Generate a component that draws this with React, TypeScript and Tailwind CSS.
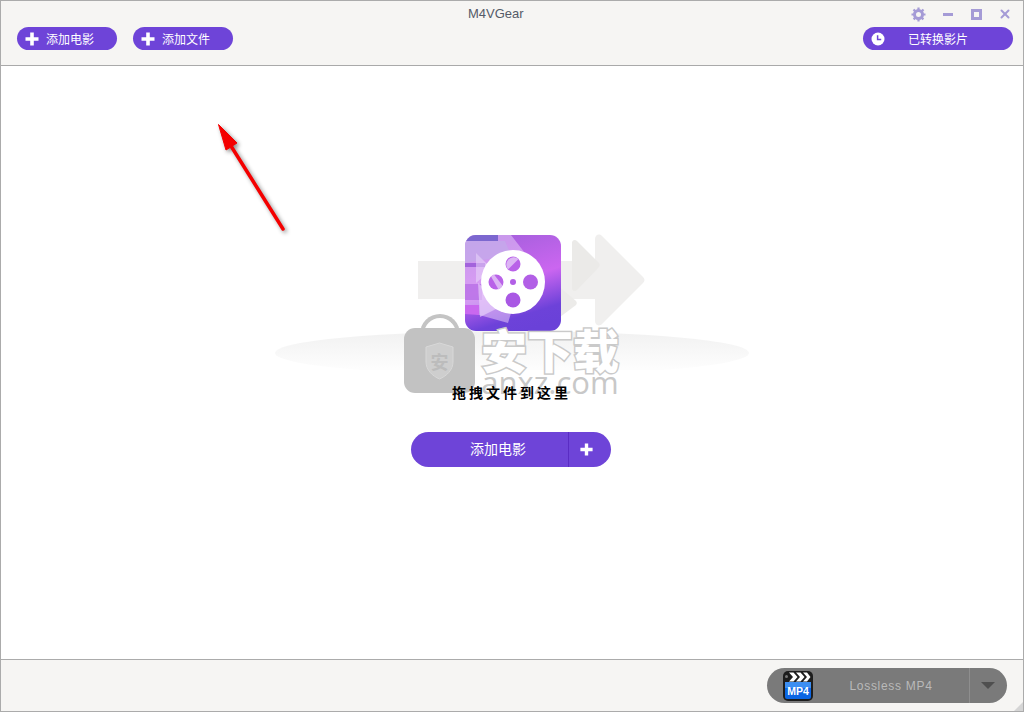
import { X } from "lucide-react";

const cjk = "font-['Noto_Sans_CJK_SC','Liberation_Sans',sans-serif]";

function PlusIcon({ size = 16 }: { size?: number }) {
  return (
    <svg width={size} height={size} viewBox="0 0 16 16" className="shrink-0">
      <path d="M6.2 1.500h3.600v4.700h4.700v3.600H9.800v4.700H6.200V9.800H1.500V6.200h4.700z" fill="#fff" />
    </svg>
  );
}

function ClockIcon() {
  return (
    <svg width="14" height="14" viewBox="0 0 14 14" className="shrink-0">
      <circle cx="7" cy="7" r="6.500" fill="#fff" />
      <path d="M6.600 3.200v4.300h3.600" fill="none" stroke="#6e44d8" strokeWidth="1.500" />
    </svg>
  );
}

function GearIcon() {
  return (
    <svg width="15" height="15" viewBox="0 0 15 15" className="shrink-0">
      <circle cx="7.500" cy="7.500" r="4" fill="none" stroke="#a59bd6" strokeWidth="3" />
      <path
        d="M7.500 0.500v14M0.500 7.500h14M2.500 2.500l10 10M12.500 2.500l-10 10"
        stroke="#a59bd6"
        strokeWidth="2.200"
        strokeDasharray="3 8 3"
      />
    </svg>
  );
}

function ToolbarButton({ label }: { label: string }) {
  return (
    <button className="flex h-[23px] w-[100px] items-center rounded-full bg-[#6e44d8] pl-[7px] text-white">
      <PlusIcon />
      <span className={`${cjk} ml-[6px] text-xs`}>{label}</span>
    </button>
  );
}

function WindowControls() {
  return (
    <div className="flex items-center text-[#a59bd6]">
      <GearIcon />
      <span className="ml-[17px] h-[3px] w-[10px] bg-[#a59bd6]" />
      <span className="ml-[18px] h-[11px] w-[11px] border-[3px] border-[#a59bd6]" />
      <X size={14} strokeWidth={3.4} className="ml-[16px]" />
    </div>
  );
}

function DropArt() {
  return (
    <svg width="480" height="140" viewBox="272 230 480 140" className="shrink-0">
      <defs>
        <linearGradient id="floor" x1="0" y1="0" x2="0" y2="1">
          <stop offset="0" stopColor="#f1f1f1" />
          <stop offset="1" stopColor="#ffffff" />
        </linearGradient>
        <linearGradient id="tile" x1="0.3" y1="0" x2="0.62" y2="1">
          <stop offset="0" stopColor="#a45fdc" />
          <stop offset="0.5" stopColor="#cb66f0" />
          <stop offset="0.85" stopColor="#6d42d9" />
          <stop offset="1" stopColor="#6a41d8" />
        </linearGradient>
        <clipPath id="tileClip">
          <rect x="465" y="235" width="96" height="96" rx="11" />
        </clipPath>
      </defs>

      <ellipse cx="512" cy="353" rx="237" ry="22" fill="url(#floor)" />

      <path d="M418 261h177v-22c0-4 4-6 7-3l41 41c2 2 2 4 0 6l-41 41c-3 3-7 1-7-3v-22H418z" fill="#f0efee" />
      <path d="M572 243c0-3 3-4 5-2l22 22c1 1 1 3 0 4l-22 23c-2 2-5 1-5-2z" fill="#ebeae8" />
      <path d="M552 281l24 20c1 1 1 3 0 4l-24 18z" fill="#ecebe9" />

      <g clipPath="url(#tileClip)">
        <rect x="465" y="235" width="96" height="96" fill="url(#tile)" />
        <path d="M465 235h46l17 22-20 66-43-12z" fill="#e6c8f8" opacity="0.55" />
        <rect x="465" y="235" width="33" height="6" fill="#7c67cf" />
        <path d="M465 241h40l6 14-46 8z" fill="#c2aeea" opacity="0.6" />
        <rect x="465" y="263" width="20" height="4" fill="#a363dc" />
        <rect x="465" y="284" width="17" height="16" fill="#b46ae4" opacity="0.7" />
        <path d="M465 305h14v10l-14-1z" fill="#c968ef" />
        <path d="M476 253l16 16-16 14z" fill="#ead7fa" opacity="0.55" />
        <path d="M478 283l26 22-24 12z" fill="#ecd9fb" opacity="0.6" />
      </g>

      <circle cx="513" cy="282" r="32" fill="#fff" />
      <circle cx="513" cy="264" r="7.500" fill="#b962e8" />
      <path d="M508 269.500a7.500 7.500 0 0 1 10.500-10.600z" fill="#dcb5f4" />
      <circle cx="496" cy="282" r="7.500" fill="#b962e8" />
      <path d="M491 276.500a7.500 7.500 0 0 1 3-2l8.500 11a7.500 7.500 0 0 1-4 4z" fill="#dcb5f4" />
      <circle cx="530.500" cy="282" r="7.500" fill="#b25fe6" />
      <circle cx="513" cy="300" r="7.500" fill="#a958e4" />
      <circle cx="513" cy="282" r="3" fill="#b25fe6" />
    </svg>
  );
}

function Watermark() {
  return (
    <div className="pointer-events-none absolute left-[403px] top-[248px] flex">
      <div className="relative h-[80px] w-[71px]">
        <div className="absolute left-[16px] top-0 h-[28px] w-[40px] rounded-t-[20px] border-[4px] border-b-0 border-[#c4c4c4]" />
        <div className="absolute left-0 top-[14px] flex h-[65px] w-[71px] items-center justify-center rounded-[11px] bg-[#c2c2c2]">
          <svg width="29" height="38" viewBox="0 0 29 38">
            <path d="M14.500 1l13.500 4v15c0 8-6.500 14-13.500 17C7.500 34 1 28 1 20V5z" fill="#cecece" stroke="#d8d8d8" />
          </svg>
          <span className={`${cjk} absolute text-lg font-bold text-[#bcbcbc]`}>安</span>
        </div>
      </div>
      <div className="ml-[4px] flex w-[142px] flex-col items-center">
        <span
          className={`${cjk} mt-[9px] text-[46px] leading-[50px] font-black whitespace-nowrap text-white [-webkit-text-stroke:3px_#cacaca] [paint-order:stroke_fill]`}
        >
          安下载
        </span>
        <span className="-mt-[5px] font-['Open_Sans',sans-serif] text-[31px] leading-[28px] text-[#c8c8c8]">
          anxz.com
        </span>
      </div>
    </div>
  );
}

function RedArrow() {
  return (
    <svg
      width="80"
      height="120"
      viewBox="210 118 80 120"
      className="pointer-events-none absolute left-[209px] top-[52px] [filter:drop-shadow(2px_2px_2px_rgba(0,0,0,0.45))]"
    >
      <path d="M283 229L231 146" stroke="#f40000" strokeWidth="3.500" strokeLinecap="round" />
      <path d="M218.500 124.500l18.500 18.500-11 7z" fill="#f40000" stroke="#f40000" strokeWidth="1" strokeLinejoin="round" />
    </svg>
  );
}

function Mp4Badge() {
  return (
    <svg width="30" height="30" viewBox="0 0 30 30" className="shrink-0">
      <rect x="0" y="0" width="30" height="30" rx="5" fill="#1d1d1d" />
      <path
        d="M6 1.500h4.500l4 4.500-4 4.500H6l4-4.500zM13 1.500h4.500l4 4.500-4 4.500H13l4-4.500zM20 1.500h4l3.500 4.500-3.500 4.500h-4l4-4.500z"
        fill="#fff"
      />
      <circle cx="3.500" cy="5.500" r="1.500" fill="#777" />
      <rect x="2" y="11" width="26" height="17" rx="2" fill="#0c66e4" />
      <rect x="2" y="11" width="26" height="6" fill="#3c8ef2" />
      <text x="15" y="23.500" textAnchor="middle" fill="#fff" fontSize="10.500" fontWeight="700" fontFamily="Liberation Sans, sans-serif">
        MP4
      </text>
    </svg>
  );
}

export default function App() {
  return (
    <div className={`${cjk} flex h-[712px] w-[1024px] flex-col overflow-hidden border border-[#ababab] bg-white`}>
      <header className="flex h-[65px] shrink-0 flex-col border-b border-[#a9a9a9] bg-[#f6f5f3] pl-4 pr-[10px]">
        <div className="relative flex h-[26px] items-center justify-end pr-[1px]">
          <span className="absolute left-[451px] top-[5px] font-['Liberation_Sans',sans-serif] text-[13px] leading-[16px] text-[#555b68]">
            M4VGear
          </span>
          <WindowControls />
        </div>
        <div className="flex items-center gap-4">
          <ToolbarButton label="添加电影" />
          <ToolbarButton label="添加文件" />
          <button className="ml-auto flex h-[23px] w-[150px] items-center rounded-full bg-[#6e44d8] pl-[8px] text-white">
            <ClockIcon />
            <span className="ml-[23px] text-xs">已转换影片</span>
          </button>
        </div>
      </header>

      <main className="relative flex flex-1 flex-col items-center pt-[164px]">
        <DropArt />
        <Watermark />
        <RedArrow />
        <p className="relative mr-[1px] mt-[12px] text-sm leading-[20px] font-bold tracking-[3px] text-black">
          拖拽文件到这里
        </p>
        <button className="mr-[2px] mt-[30px] flex h-[35px] w-[200px] items-center rounded-full bg-[#6e44d8] text-white">
          <span className="flex-1 pb-[3px] pl-[17px] text-center text-sm">添加电影</span>
          <span className="flex h-full w-[43px] items-center justify-center border-l border-[#5a2cc4] pr-[8px]">
            <PlusIcon size={15} />
          </span>
        </button>
      </main>

      <footer className="relative flex h-[52px] shrink-0 items-center justify-end border-t border-[#ababab] bg-[#f6f5f3] pr-[16px]">
        <div className="flex h-[35px] w-[240px] items-center rounded-full bg-[#7a7a7a] pl-4">
          <Mp4Badge />
          <span className="flex-1 text-center font-['Liberation_Sans',sans-serif] text-xs tracking-[0.7px] text-[#b9b9b9]">
            Lossless MP4
          </span>
          <span className="flex h-full w-[38px] items-center justify-center border-l border-[#8e8e8e] pr-[2px]">
            <span className="-mt-[1px] h-0 w-0 border-x-[7px] border-t-[7px] border-x-transparent border-t-[#4f4f4f]" />
          </span>
        </div>
        <svg width="9" height="9" viewBox="0 0 9 9" className="absolute bottom-0 right-0">
          <path d="M9 0v9H0z" fill="#d5d5d5" />
        </svg>
      </footer>
    </div>
  );
}
